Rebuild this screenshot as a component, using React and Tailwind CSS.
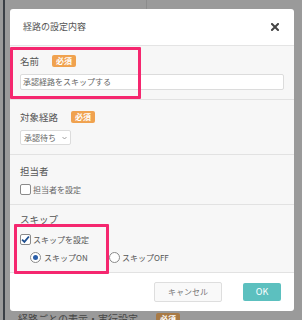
import React from "react";

const font = { fontFamily: '"Noto Sans CJK JP", "Noto Sans", sans-serif' };

const Badge = ({ dim }) => (
  <span
    className={`inline-flex items-center justify-center h-[12px] px-[4px] rounded-[2px] text-[8px] font-bold leading-none text-white ${
      dim ? "bg-[#a87a45]" : "bg-[#f0a24f]"
    }`}
  >
    必須
  </span>
);

const Checkbox = ({ checked }) => (
  <span className="w-[11px] h-[11px] rounded-[2px] border border-[#8a8a8a] bg-white flex items-center justify-center shrink-0">
    {checked && (
      <svg width="10" height="9" viewBox="0 0 10 9">
        <path d="M1.2 4.6 L3.8 7.2 L8.8 1.2" fill="none" stroke="#1f4f8f" strokeWidth="2" />
      </svg>
    )}
  </span>
);

const Radio = ({ checked }) => (
  <span className="w-[11px] h-[11px] rounded-full border border-[#8a8a8a] bg-white flex items-center justify-center shrink-0">
    {checked && <span className="w-[5px] h-[5px] rounded-full bg-[#2a5ea8]" />}
  </span>
);

const Section = ({ label, badge, className = "", children }) => (
  <div className={`px-[10px] border-b border-[#e2e2e2] ${className}`}>
    <div className="h-[12px] flex items-center gap-[13px] text-[9.5px] text-[#555]">
      <span>{label}</span>
      {badge && <Badge />}
    </div>
    {children}
  </div>
);

export default function App() {
  return (
    <div className="w-[302px] h-[320px] overflow-hidden bg-[#9a9a9a] flex" style={font}>
      <div className="w-[3px] shrink-0" />
      <div className="w-[2px] shrink-0 bg-[#3a3f45]" />
      <div className="pl-[5px] flex flex-col">
        {/* page behind the dialog */}
        <div className="h-[9px] shrink-0 flex">
          <div className="w-[137px] border-r border-[#8c8c8c]" />
        </div>

        {/* dialog */}
        <div className="relative shrink-0 w-[284px] bg-white rounded-[3px]">
          <div className="h-[37px] flex items-center justify-between pl-[13px] pr-[15px] border-b border-[#e4e4e4]">
            <span className="text-[9px] text-[#555]">経路の設定内容</span>
            <svg width="8" height="8" viewBox="0 0 8 8">
              <path d="M1 1 L7 7 M7 1 L1 7" stroke="#444" strokeWidth="2" strokeLinecap="square" />
            </svg>
          </div>

          <div className="bg-[#f7f7f7]">
            <Section label="名前" badge className="pt-[9px] pb-[9px]">
              <div className="mt-[7px] h-[16px] bg-white border border-[#dcdcdc] rounded-[2px] flex items-center px-[2px] text-[8px] text-[#666]">
                承認経路をスキップする
              </div>
            </Section>

            <Section label="対象経路" badge className="pt-[11px] pb-[9px]">
              <div className="mt-[7px] h-[15px] w-[51px] bg-white border border-[#dcdcdc] rounded-[2px] flex items-center justify-between px-[3px] text-[8px] text-[#666]">
                <span>承認待ち</span>
                <svg width="5" height="4" viewBox="0 0 5 4">
                  <path d="M0.5 1 L2.5 3 L4.5 1" fill="none" stroke="#888" strokeWidth="0.8" />
                </svg>
              </div>
            </Section>

            <Section label="担当者" className="pt-[10px] pb-[9px]">
              <div className="mt-[7px] h-[11px] flex items-center gap-[2px] text-[8px] text-[#666]">
                <Checkbox />
                <span>担当者を設定</span>
              </div>
            </Section>

            <Section label="スキップ" className="pt-[8px] pb-[9px]">
              <div className="mt-[9px] h-[11px] flex items-center gap-[2px] text-[8px] text-[#555]">
                <Checkbox checked />
                <span>スキップを設定</span>
              </div>
              <div className="mt-[7px] h-[11px] flex items-center pl-[10px] text-[8px] text-[#555]">
                <Radio checked />
                <span className="ml-[3px] w-[65px]">スキップON</span>
                <Radio />
                <span className="ml-[2px]">スキップOFF</span>
              </div>
            </Section>
          </div>

          <div className="h-[38px] flex items-center justify-end pr-[13px] gap-[21px]">
            <button className="h-[20px] w-[68px] bg-[#f9f9f9] border border-[#dedede] rounded-[2px] text-[8px] text-[#777]">
              キャンセル
            </button>
            <button className="h-[18px] w-[38px] bg-[#5cc0bf] rounded-[2px] text-[9px] text-white">
              OK
            </button>
          </div>

          {/* annotation highlights */}
          <div className="absolute left-0 top-[38px] w-[131px] h-[52px] border-[3px] border-[#f5276f] rounded-[1px]" />
          <div className="absolute left-[4px] top-[215px] w-[95px] h-[50px] border-[3px] border-[#f5276f] rounded-[1px]" />
        </div>

        {/* page behind the dialog, below */}
        <div className="shrink-0 mt-[2px] pl-[8px] flex items-start gap-[18px] text-[10px] text-[#444] leading-none">
          <span className="pt-[1px]">経路ごとの表示・実行設定</span>
          <Badge dim />
        </div>
      </div>
    </div>
  );
}
